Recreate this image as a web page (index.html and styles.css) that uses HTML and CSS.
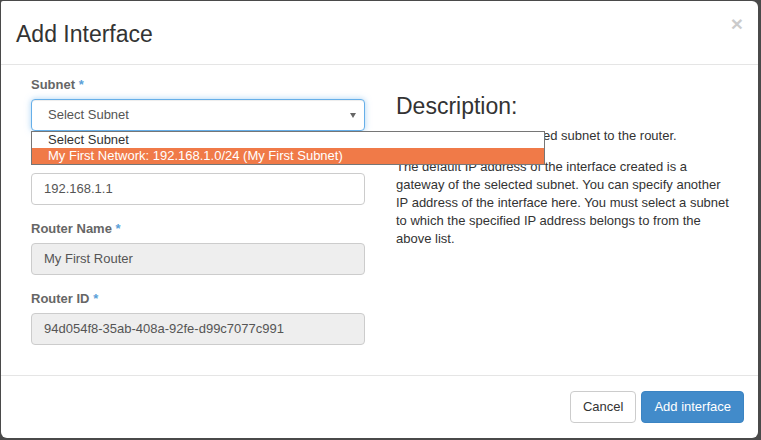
FILE: index.html
```html
<!DOCTYPE html>
<html>
<head>
<meta charset="utf-8">
<link rel="stylesheet" href="styles.css">
</head>
<body>
<div class="modal">
  <div class="modal-header">
    <h4 class="modal-title">Add Interface</h4>
    <button class="close" type="button">&times;</button>
  </div>
  <div class="modal-body">
    <div class="col col-form">
      <div class="group group-subnet">
        <label class="lbl">Subnet <span class="req">*</span></label>
        <div class="select-wrap">
          <div class="control select">Select Subnet<span class="caret"></span></div>
          <ul class="options">
            <li class="opt">Select Subnet</li>
            <li class="opt opt-hl">My First Network: 192.168.1.0/24 (My First Subnet)</li>
          </ul>
        </div>
      </div>
      <div class="group group-ip">
        <label class="lbl">IP Address (optional)</label>
        <div class="control">192.168.1.1</div>
      </div>
      <div class="group">
        <label class="lbl">Router Name <span class="req">*</span></label>
        <div class="control disabled">My First Router</div>
      </div>
      <div class="group">
        <label class="lbl">Router ID <span class="req">*</span></label>
        <div class="control disabled">94d054f8-35ab-408a-92fe-d99c7077c991</div>
      </div>
    </div>
    <div class="col col-desc">
      <h3 class="desc-title">Description:</h3>
      <p class="desc">You can connect a specified subnet to the router.</p>
      <p class="desc">The default IP address of the interface created is a gateway of the selected subnet. You can specify another IP address of the interface here. You must select a subnet to which the specified IP address belongs to from the above list.</p>
    </div>
  </div>
  <div class="modal-footer">
    <button class="btn btn-default" type="button">Cancel</button>
    <button class="btn btn-primary" type="button">Add interface</button>
  </div>
</div>
</body>
</html>
```

FILE: styles.css
```css
* { box-sizing: border-box; }

html, body {
  margin: 0;
  height: 440px;
  overflow: hidden;
}

body {
  background: #4a4a4a;
  padding: 1px 0 0 1px;
  font-family: "Liberation Sans", Arial, sans-serif;
  font-size: 13px;
  line-height: 18px;
  color: #333;
}

.modal {
  width: 757px;
  height: 437px;
  background: #fff;
  border-radius: 2px 6px 6px 6px;
  display: flex;
  flex-direction: column;
}

.modal-header {
  display: flex;
  justify-content: space-between;
  align-items: flex-start;
  padding: 17px 15px 14px 15px;
  border-bottom: 1px solid #e5e5e5;
}

.modal-title {
  margin: 0;
  font-size: 23px;
  line-height: 32px;
  font-weight: normal;
  color: #333;
}

.close {
  margin-top: -5px;
  padding: 0;
  border: 0;
  background: transparent;
  font-family: "Liberation Sans", Arial, sans-serif;
  font-size: 21px;
  font-weight: bold;
  line-height: 21px;
  color: #000;
  opacity: 0.2;
}

.modal-body {
  display: grid;
  grid-template-columns: 364px 1fr;
  padding: 10px 15px 16px 15px;
  height: 311px;
}

.col-form { padding: 0 15px; }
.col-desc { padding: 0 11px 0 16px; }

.group { margin-bottom: 14px; }

.lbl {
  display: block;
  font-weight: bold;
  line-height: 19px;
  margin-bottom: 5px;
  color: #666;
}

.group-ip .lbl { margin-bottom: 9px; }

.req { color: #5a9fd8; }

.control {
  height: 32px;
  border: 1px solid #ccc;
  border-radius: 4px;
  padding: 0 12px;
  line-height: 30px;
  color: #555;
  background: #fff;
}

.control.disabled { background: #eee; }

.select-wrap { position: relative; }

.select {
  display: flex;
  justify-content: space-between;
  align-items: center;
  padding: 0 8px 0 16px;
  border-color: #66afe9;
  box-shadow: inset 0 1px 1px rgba(0,0,0,.075), 0 0 6px rgba(102,175,233,.55);
}

.caret {
  width: 0;
  height: 0;
  border-left: 3px solid transparent;
  border-right: 3px solid transparent;
  border-top: 5px solid #666;
}

.options {
  position: absolute;
  top: 100%;
  left: 0;
  width: 514px;
  margin: 0;
  padding: 0;
  list-style: none;
  background: #fff;
  border: 1px solid #767676;
  z-index: 5;
}

.opt {
  height: 16px;
  line-height: 16px;
  padding-left: 16px;
  color: #333;
  white-space: nowrap;
}

.opt-hl {
  background: #f07a48;
  color: #fff;
}

.desc-title {
  margin: 19px 0 8px;
  font-size: 23px;
  line-height: 25px;
  font-weight: normal;
  color: #333;
}

.desc {
  margin: 0 0 13px;
  line-height: 18px;
  color: #333;
}

.modal-footer {
  display: flex;
  justify-content: flex-end;
  gap: 5px;
  padding: 15px 14px 15px 15px;
  border-top: 1px solid #e5e5e5;
}

.btn {
  height: 32px;
  padding: 0 12px;
  border: 1px solid #ccc;
  border-radius: 4px;
  background: #fff;
  font-family: "Liberation Sans", Arial, sans-serif;
  font-size: 13px;
  line-height: 30px;
  color: #333;
}

.btn-primary {
  background: #428bca;
  border-color: #3b84c3;
  color: #fff;
}
```
